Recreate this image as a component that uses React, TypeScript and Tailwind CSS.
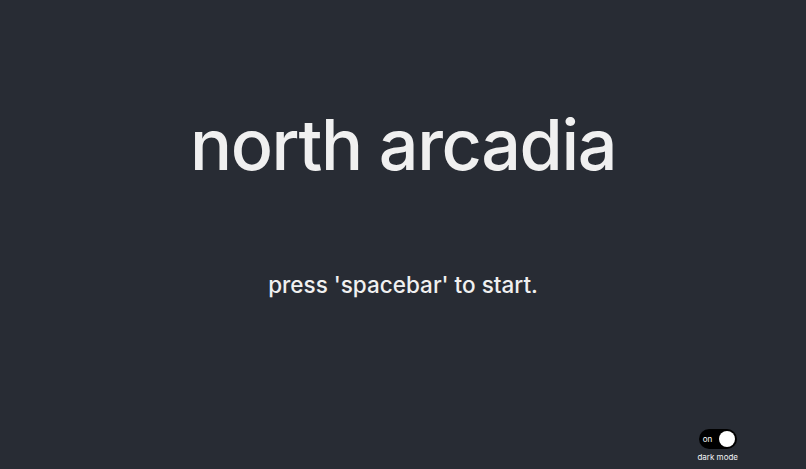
import { useState } from 'react';

function DarkModeToggle() {
  const [on, setOn] = useState(true);

  return (
    <div className="flex flex-col items-center gap-[4px]">
      <button
        onClick={() => setOn(!on)}
        className="relative flex items-center w-[38px] h-[20px] rounded-full bg-black"
      >
        <span className="absolute left-[4px] text-[8px] leading-none text-white">on</span>
        <span className="absolute right-[2px] w-[16px] h-[16px] rounded-full bg-white" />
      </button>
      <span className="text-[8px] leading-none text-gray-100">dark mode</span>
    </div>
  );
}

export default function App() {
  return (
    <div
      className="w-full h-[469px] bg-[#282c34] text-[#f0f0f0] flex flex-col items-center"
      style={{ fontFamily: 'Inter, "Noto Sans", sans-serif' }}
    >
      {/* TITLE */}
      <h1 className="mt-[110px] text-[70px] leading-none font-medium tracking-[-0.02em]">
        north arcadia
      </h1>

      {/* PROMPT */}
      <p className="mt-[94px] text-[22.5px] leading-none font-medium">
        press 'spacebar' to start.
      </p>

      {/* FOOTER */}
      <div className="mt-auto mb-[8px] self-end mr-[68px]">
        <DarkModeToggle />
      </div>
    </div>
  );
}
